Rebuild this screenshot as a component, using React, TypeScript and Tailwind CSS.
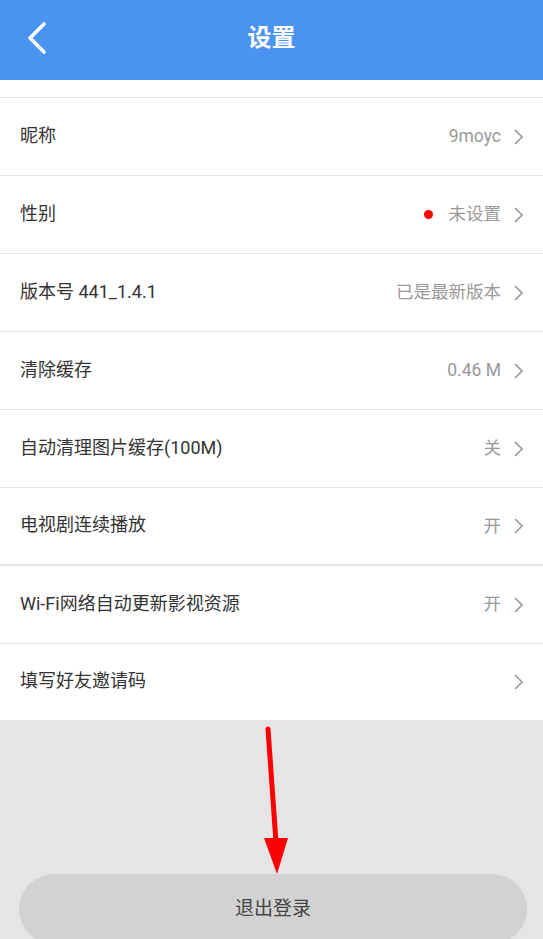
import React from "react";

type Row = {
  label: string;
  value?: string;
  dot?: boolean;
  thick?: boolean;
  last?: boolean;
};

const rows: Row[] = [
  { label: "昵称", value: "9moyc" },
  { label: "性别", value: "未设置", dot: true },
  { label: "版本号 441_1.4.1", value: "已是最新版本" },
  { label: "清除缓存", value: "0.46 M" },
  { label: "自动清理图片缓存(100M)", value: "关" },
  { label: "电视剧连续播放", value: "开", thick: true },
  { label: "Wi-Fi网络自动更新影视资源", value: "开" },
  { label: "填写好友邀请码", last: true },
];

const Chevron = () => (
  <svg width="12" height="20" viewBox="0 0 12 20" className="ml-[10px]">
    <path d="M4 3 L11 10 L4 17" fill="none" stroke="#9a9a9a" strokeWidth="1.6" />
  </svg>
);

export default function App() {
  return (
    <div
      className="relative flex h-[939px] w-[543px] flex-col overflow-hidden bg-[#e5e5e5]"
      style={{ fontFamily: "Roboto, 'Noto Sans CJK SC', sans-serif" }}
    >
      {/* header */}
      <div className="relative flex h-[80px] shrink-0 items-center justify-center bg-[#4b93f1]">
        <svg width="24" height="34" viewBox="0 0 24 34" className="absolute left-[25px] top-[21px]">
          <path d="M19 3 L5 17 L19 31" fill="none" stroke="#fff" strokeWidth="3.6" strokeLinecap="round" strokeLinejoin="round" />
        </svg>
        <span className="-mt-[4px] text-[24px] font-bold text-white">设置</span>
      </div>

      <div className="h-[18px] shrink-0 border-b border-[#e2e2e2] bg-white" />

      {rows.map((r) => (
        <div
          key={r.label}
          className={
            "flex shrink-0 items-center bg-white pl-[20px] pr-[20px] " +
            (r.last
              ? "h-[76px]"
              : r.thick
                ? "h-[78px] border-b-2 border-[#e2e2e2]"
                : "h-[78px] border-b border-[#e8e8e8]")
          }
        >
          <span className="-mt-[3px] text-[18px] text-[#333]">{r.label}</span>
          <div className="ml-auto flex items-center">
            {r.dot && <span className="mr-[16px] h-[9px] w-[9px] rounded-full bg-[#ff0000]" />}
            {r.value && <span className="text-[17.5px] text-[#999]">{r.value}</span>}
            <Chevron />
          </div>
        </div>
      ))}

      <div className="flex flex-1 flex-col justify-end pl-[19px] pr-[16px]">
        <div className="-mb-[5px] flex h-[70px] items-center justify-center rounded-full bg-[#d2d2d2]">
          <span className="text-[19px] text-[#444]">退出登录</span>
        </div>
      </div>

      {/* red arrow annotation */}
      <svg width="543" height="939" className="pointer-events-none absolute left-0 top-0">
        <line x1="268" y1="729" x2="276" y2="842" stroke="#ff0000" strokeWidth="5" strokeLinecap="round" />
        <polygon points="264,838 288,838 277,874" fill="#ff0000" />
      </svg>
    </div>
  );
}
